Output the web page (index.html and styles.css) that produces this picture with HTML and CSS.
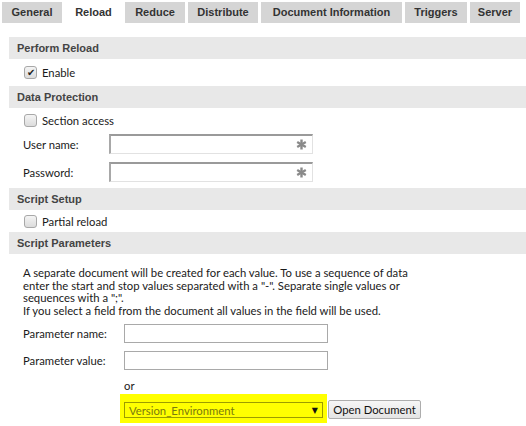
FILE: index.html
```html
<!DOCTYPE html>
<html>
<head>
<meta charset="utf-8">
<link rel="stylesheet" href="styles.css">
</head>
<body>
<div class="tabs">
  <div class="tab t-general">General</div>
  <div class="tab active t-reload">Reload</div>
  <div class="tab t-reduce">Reduce</div>
  <div class="tab t-dist">Distribute</div>
  <div class="tab t-doc">Document Information</div>
  <div class="tab t-trig">Triggers</div>
  <div class="tab t-server">Server</div>
</div>
<div class="content">
  <div class="header">Perform Reload</div>
  <div class="check-row r1"><span class="cb checked">&#10004;</span><span>Enable</span></div>
  <div class="header">Data Protection</div>
  <div class="check-row r2"><span class="cb"></span><span>Section access</span></div>
  <div class="field-row"><span class="label">User name:</span><span class="pwd-input"><svg class="star" width="11" height="11" viewBox="0 0 11 11"><g stroke="#8a8a8a" stroke-width="2.4" stroke-linecap="butt"><line x1="5.5" y1="0.5" x2="5.5" y2="10.5"/><line x1="1.2" y1="3" x2="9.8" y2="8"/><line x1="1.2" y1="8" x2="9.8" y2="3"/></g></svg></span></div>
  <div class="field-row second"><span class="label">Password:</span><span class="pwd-input"><svg class="star" width="11" height="11" viewBox="0 0 11 11"><g stroke="#8a8a8a" stroke-width="2.4" stroke-linecap="butt"><line x1="5.5" y1="0.5" x2="5.5" y2="10.5"/><line x1="1.2" y1="3" x2="9.8" y2="8"/><line x1="1.2" y1="8" x2="9.8" y2="3"/></g></svg></span></div>
  <div class="header">Script Setup</div>
  <div class="check-row r3"><span class="cb"></span><span>Partial reload</span></div>
  <div class="header">Script Parameters</div>
  <div class="params">
    <p class="desc">A separate document will be created for each value. To use a sequence of data<br>enter the start and stop values separated with a "-". Separate single values or<br>sequences with a ";".<br>If you select a field from the document all values in the field will be used.</p>
    <div class="param-row"><span class="plabel">Parameter name:</span><span class="pinput"></span></div>
    <div class="param-row"><span class="plabel">Parameter value:</span><span class="pinput"></span></div>
    <div class="or">or</div>
    <div class="select-row">
      <div class="highlight"><div class="select"><span>Version_Environment</span><span class="arrow">&#9660;</span></div></div>
      <div class="btn">Open Document</div>
    </div>
  </div>
</div>
</body>
</html>
```
FILE: styles.css
```css
html, body {
  margin: 0;
  padding: 0;
  background: #ffffff;
}
body {
  width: 526px;
  height: 426px;
  overflow: hidden;
  font-family: Lato, "Open Sans", sans-serif;
  font-size: 11.3px;
  color: #1a1a1a;
}
.tabs {
  display: flex;
  gap: 3px;
  padding-left: 2px;
  margin-top: 2px;
  height: 21px;
}
.tab {
  background: #d5d5d5;
  color: #333333;
  font-family: "Liberation Sans", Arial, sans-serif;
  font-weight: bold;
  font-size: 11px;
  line-height: 21px;
  text-align: center;
  box-sizing: border-box;
}
.tab.active { background: #ffffff; }
.t-general { width: 60px; }
.t-reload { width: 57px; }
.t-reduce { width: 60px; }
.t-dist { width: 70px; }
.t-doc { width: 141px; }
.t-trig { width: 62px; }
.t-server { width: 50px; }
.content {
  margin-top: 14px;
  margin-left: 9px;
}
.header {
  background: #e8e8e8;
  height: 22px;
  line-height: 22px;
  padding-left: 8px;
  font-family: "Liberation Sans", Arial, sans-serif;
  font-weight: bold;
  font-size: 11px;
  color: #444444;
}
.check-row {
  display: flex;
  align-items: center;
  padding-left: 15px;
  gap: 5px;
}
.r1 { height: 27px; }
.r2 { height: 24px; }
.r3 { height: 22px; }
.cb {
  width: 11px;
  height: 11px;
  border: 1px solid #a8a8a8;
  border-radius: 3px;
  background: linear-gradient(#f4f4f4, #dcdcdc);
  font-size: 10px;
  line-height: 11px;
  text-align: center;
  color: #222;
}
.field-row {
  display: flex;
  align-items: center;
  height: 20px;
  margin-top: 2px;
  padding-left: 14px;
}
.field-row.second { margin-top: 8px; margin-bottom: 6px; }
.label { width: 86px; }
.pwd-input {
  width: 204px;
  height: 20px;
  box-sizing: border-box;
  border-top: 2px solid #9a9a9a;
  border-left: 2px solid #a8a8a8;
  border-right: 1px solid #e2e2e2;
  border-bottom: 1px solid #e2e2e2;
  display: flex;
  align-items: center;
  justify-content: flex-end;
  padding-right: 5px;
}
.params {
  padding-left: 14px;
  padding-top: 13px;
}
.desc {
  margin: 0;
  line-height: 12.6px;
  white-space: nowrap;
}
.param-row {
  display: flex;
  align-items: center;
  height: 19px;
  margin-top: 7px;
}
.param-row + .param-row { margin-top: 8px; }
.plabel { width: 101px; }
.pinput {
  width: 204px;
  height: 19px;
  box-sizing: border-box;
  border: 1px solid #a9a9a9;
}
.or {
  margin-left: 101px;
  margin-top: 9px;
  height: 14px;
  line-height: 14px;
}
.select-row {
  display: flex;
  align-items: flex-end;
  margin-left: 97px;
  margin-top: 1px;
}
.highlight {
  background: #ffff00;
  padding: 8px 4px 5px 4px;
}
.select {
  width: 199px;
  height: 16px;
  box-sizing: border-box;
  border: 1px solid #9c9c00;
  display: flex;
  align-items: center;
  justify-content: space-between;
  padding: 0 4px 0 4px;
  color: #7a7a10;
}
.arrow {
  color: #111;
  font-size: 8px;
  font-family: "DejaVu Sans", sans-serif;
}
.btn {
  width: 93px;
  height: 19px;
  box-sizing: border-box;
  border: 1px solid #adadad;
  border-radius: 2px;
  background: linear-gradient(#f6f6f6, #e4e4e4);
  line-height: 17px;
  text-align: center;
  margin-left: 1px;
  margin-bottom: 4px;
  color: #111;
}
```
